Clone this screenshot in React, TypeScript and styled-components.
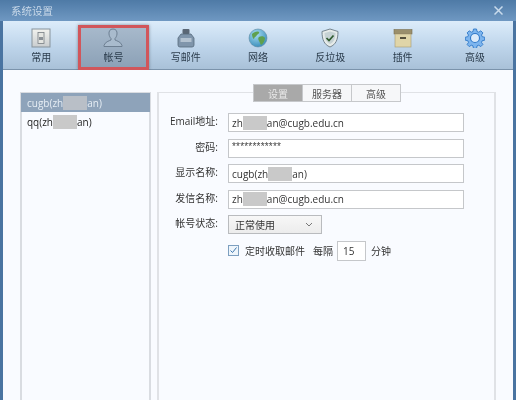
import React from "react";
import styled, { createGlobalStyle } from "styled-components";

const Global = createGlobalStyle`
  html, body { margin: 0; padding: 0; background: #f9fbff; }
  body { font-family: "Open Sans", "Noto Sans CJK SC", sans-serif; }
  #root { width: 516px; height: 400px; overflow: hidden; }
`;

const Window = styled.div`
  width: 516px;
  height: 400px;
  box-sizing: border-box;
  display: flex;
  flex-direction: column;
  background: #4a74a1;
  padding: 0 3px;
  filter: blur(0.4px);
`;

const TitleBar = styled.header`
  height: 21px;
  margin: 0 -3px;
  padding: 0 13px 0 11px;
  flex: none;
  display: flex;
  align-items: center;
  justify-content: space-between;
  background: linear-gradient(#4e7aa6, #6f98c2);
`;

const Title = styled.span`
  font: 10.5px "Noto Sans CJK SC", sans-serif;
  color: #c9d9e9;
`;

const Toolbar = styled.nav`
  height: 49px;
  flex: none;
  box-sizing: border-box;
  display: flex;
  padding-left: 2px;
  background: linear-gradient(#dcecfa, #bdd4ea 55%, #a9c1d8);
  border-bottom: 1px solid #7b93ab;
`;

const Tool = styled.div<{ $active?: boolean }>`
  width: 72.3px;
  height: 48px;
  flex: none;
  box-sizing: border-box;
  display: flex;
  flex-direction: column;
  align-items: center;
  padding-top: ${(p) => (p.$active ? "0" : "7px")};
  gap: 2px;
  font: 10px/14px "Noto Sans CJK SC", sans-serif;
  color: #2b3c4c;
  ${(p) =>
    p.$active &&
    `
    margin: 4px 1px 0;
    width: 70.3px;
    height: 45px;
    border: 3px solid #d1565b;
    box-shadow: 0 0 3px rgba(60,70,80,.55);
    background: linear-gradient(#a7b9cb, #8ca1b7);
  `}
`;

const Content = styled.main`
  flex: 1;
  min-height: 0;
  display: flex;
  gap: 6px;
  padding: 22px 17px 0;
  background: #f9fbff;
`;

const AccountList = styled.ul`
  width: 131px;
  margin: 0;
  padding: 0;
  flex: none;
  box-sizing: border-box;
  list-style: none;
  border-style: solid;
  border-color: #d9dce1;
  border-width: 1px 2px 0;
  font-size: 10px;
`;

const Account = styled.li<{ $selected?: boolean }>`
  height: 19px;
  margin: 0 -1px;
  padding-left: 6px;
  display: flex;
  align-items: center;
  color: ${(p) => (p.$selected ? "#e6edf4" : "#222")};
  background: ${(p) => (p.$selected ? "#8ea3ba" : "transparent")};
`;

const Mask = styled.span<{ $w: number; $tone?: string }>`
  display: inline-block;
  width: ${(p) => p.$w}px;
  height: 14px;
  background: ${(p) => p.$tone ?? "#c9c9c9"};
`;

const Panel = styled.section`
  flex: 1;
  min-width: 0;
  box-sizing: border-box;
  border-style: solid;
  border-color: #e0e2e6;
  border-width: 1px 2px 0;
  display: flex;
  flex-direction: column;
`;

const Tabs = styled.div`
  align-self: center;
  box-sizing: border-box;
  display: flex;
  height: 18px;
  margin-top: -9px;
  margin-left: 1px;
  border: 1px solid #c6c8cb;
  background: #f6f7f9;
`;

const Tab = styled.div<{ $active?: boolean }>`
  width: 48px;
  display: flex;
  align-items: center;
  justify-content: center;
  font: 10px "Noto Sans CJK SC", sans-serif;
  color: ${(p) => (p.$active ? "#e9e9e9" : "#555")};
  background: ${(p) => (p.$active ? "#a9a9a9" : "transparent")};
  & + & {
    border-left: 1px solid #c6c8cb;
  }
`;

const Form = styled.form`
  display: grid;
  grid-template-columns: 59px 236px;
  grid-auto-rows: 19px;
  column-gap: 10px;
  row-gap: 6.5px;
  margin-top: 11px;
`;

const Label = styled.label`
  display: flex;
  align-items: center;
  justify-content: flex-end;
  font: 10px "Open Sans", "Noto Sans CJK SC", sans-serif;
  color: #333;
  white-space: nowrap;
  padding-bottom: 4px;
`;

const FieldBox = styled.div`
  box-sizing: border-box;
  border: 1px solid #c5c7ca;
  background: #fff;
  display: flex;
  align-items: center;
  padding-left: 3px;
  font-size: 10px;
  color: #333;
  white-space: nowrap;
`;

const Stars = styled.span`
  font: 10px "Liberation Sans", sans-serif;
  color: #444;
  letter-spacing: 0.2px;
  padding-bottom: 3px;
`;

const Select = styled.div`
  width: 94px;
  box-sizing: border-box;
  border: 1px solid #b9bbbe;
  background: linear-gradient(#f7f7f7, #ececec);
  display: flex;
  align-items: center;
  justify-content: space-between;
  padding: 0 8px 0 6px;
  font: 10px "Noto Sans CJK SC", sans-serif;
  color: #333;
`;

const Schedule = styled.div`
  grid-column: 2;
  display: flex;
  align-items: center;
  font: 10px "Noto Sans CJK SC", sans-serif;
  color: #333;
  height: 20px;
`;

const Check = styled.span`
  width: 11px;
  height: 11px;
  box-sizing: border-box;
  border: 1px solid #7d9fc0;
  background: #eef5fb;
  display: flex;
  align-items: center;
  justify-content: center;
  margin-right: 6px;
`;

const Every = styled.span`
  margin: 0 4px 0 8px;
`;

const Minutes = styled.div`
  width: 29px;
  height: 20px;
  box-sizing: border-box;
  border: 1px solid #c5c7ca;
  background: #fff;
  display: flex;
  align-items: center;
  padding-left: 5px;
  margin-right: 5px;
  font: 10px "Open Sans", sans-serif;
`;

const Icon = styled.svg`
  width: 20px;
  height: 20px;
  flex: none;
`;

const CloseIcon = () => (
  <svg width="9" height="9" viewBox="0 0 9 9">
    <path d="M.5 .5l8 8M8.500 .5l-8 8" stroke="#c9dbec" strokeWidth="1.500" />
  </svg>
);

const GeneralIcon = () => (
  <Icon viewBox="0 0 20 20">
    <defs>
      <linearGradient id="g1" x1="0" y1="0" x2="0" y2="1">
        <stop offset="0" stopColor="#f2f2ee" />
        <stop offset="1" stopColor="#c9cdcf" />
      </linearGradient>
    </defs>
    <rect x="1" y="1" width="18" height="18" fill="url(#g1)" stroke="#87939c" />
    <rect x="7" y="4.500" width="6" height="11" fill="#e4e5e1" stroke="#777d83" strokeWidth="0.8" />
    <rect x="8" y="9" width="4" height="3" fill="#8a9096" />
  </Icon>
);

const PersonIcon = () => (
  <Icon viewBox="0 0 20 20">
    <path d="M10 1c-3 0-4.300 2.200-4 5 .2 2 1 3.400 2 4.500v1.500c-2 1-6 1.800-7 5.500v1h18v-1c-1-3.700-5-4.500-7-5.500v-1.500c1-1.100 1.800-2.500 2-4.500 .3-2.800-1-5-4-5z" fill="#a9bbcd" stroke="#66788b" strokeWidth="0.9" />
  </Icon>
);

const InkIcon = () => (
  <Icon viewBox="0 0 20 20">
    <rect x="6.500" y="1" width="7" height="5" rx="1" fill="#5a6775" />
    <path d="M5 6h10l3 4v7a2 2 0 0 1-2 2H4a2 2 0 0 1-2-2v-7z" fill="#7f95ab" stroke="#56697c" strokeWidth="0.8" />
    <rect x="4.500" y="10" width="11" height="4" fill="#b3c2d0" />
  </Icon>
);

const GlobeIcon = () => (
  <Icon viewBox="0 0 20 20">
    <defs>
      <radialGradient id="g2" cx="0.4" cy="0.3" r="0.8">
        <stop offset="0" stopColor="#a6dcf2" />
        <stop offset="1" stopColor="#2f86b5" />
      </radialGradient>
    </defs>
    <circle cx="10" cy="10" r="9" fill="url(#g2)" stroke="#5f8aa3" strokeWidth="0.6" />
    <path d="M4 6c2-2 5-3 7-2 1 1-1 2-2 3-1 2-3 2-3 4-1 0-2-3-2-5zM11 9c2-1 5-1 6 1 0 3-2 6-4 7-1-1-1-3-2-4-1-2-1-3 0-4z" fill="#5fa04e" />
  </Icon>
);

const ShieldIcon = () => (
  <Icon viewBox="0 0 20 20">
    <path d="M10 1l8 2.500c0 8-2 13-8 15.500-6-2.500-8-7.500-8-15.500z" fill="#e6ebe9" stroke="#76858f" strokeWidth="1" />
    <path d="M10 3.500l5.500 1.500c0 5-1.500 9-5.500 11-4-2-5.500-6-5.500-11z" fill="#c6d2d4" />
    <path d="M6.500 10l2.500 2.500 4.500-5" fill="none" stroke="#2f5a2e" strokeWidth="1.700" />
  </Icon>
);

const BoxIcon = () => (
  <Icon viewBox="0 0 20 20">
    <rect x="1" y="1.500" width="18" height="4.500" fill="#9a8f6c" stroke="#7a7052" strokeWidth="0.6" />
    <rect x="2" y="6" width="16" height="13" fill="#e0d5a8" stroke="#a59a74" strokeWidth="0.6" />
    <rect x="7" y="9" width="6" height="2" fill="#55503c" />
  </Icon>
);

const GearIcon = () => (
  <Icon viewBox="0 0 20 20">
    <path
      d="M8.500 1h3l.5 2.500 1.700.7 2.100-1.400 2.100 2.100-1.400 2.100.7 1.700 2.500.5v3l-2.500.5-.7 1.700 1.400 2.100-2.100 2.100-2.100-1.400-1.700.7-.5 2.500h-3l-.5-2.500-1.700-.7-2.100 1.400-2.100-2.100 1.400-2.100-.7-1.700-2.500-.5v-3l2.500-.5.7-1.700-1.400-2.100 2.100-2.100 2.100 1.400 1.700-.7z"
      fill="#7db5ee"
      stroke="#2f78c8"
      strokeWidth="0.9"
    />
    <circle cx="10" cy="10" r="4.500" fill="#dcebfa" stroke="#2f78c8" strokeWidth="1.100" />
  </Icon>
);

const tools = [
  { label: "常用", icon: <GeneralIcon /> },
  { label: "帐号", icon: <PersonIcon />, active: true },
  { label: "写邮件", icon: <InkIcon /> },
  { label: "网络", icon: <GlobeIcon /> },
  { label: "反垃圾", icon: <ShieldIcon /> },
  { label: "插件", icon: <BoxIcon /> },
  { label: "高级", icon: <GearIcon /> },
];

export default function App() {
  return (
    <Window>
      <Global />
      <TitleBar>
        <Title>系统设置</Title>
        <CloseIcon />
      </TitleBar>
      <Toolbar>
        {tools.map((t) => (
          <Tool key={t.label} $active={t.active}>
            {t.icon}
            {t.label}
          </Tool>
        ))}
      </Toolbar>
      <Content>
        <AccountList>
          <Account $selected>
            cugb(zh<Mask $w={24} $tone="#b9bfc7" />an)
          </Account>
          <Account>
            qq(zh<Mask $w={24} />an)
          </Account>
        </AccountList>
        <Panel>
          <Tabs>
            <Tab $active>设置</Tab>
            <Tab>服务器</Tab>
            <Tab>高级</Tab>
          </Tabs>
          <Form>
            <Label>Email地址:</Label>
            <FieldBox>
              zh<Mask $w={24} />an@cugb.edu.cn
            </FieldBox>
            <Label>密码:</Label>
            <FieldBox>
              <Stars>************</Stars>
            </FieldBox>
            <Label>显示名称:</Label>
            <FieldBox>
              cugb(zh<Mask $w={24} />an)
            </FieldBox>
            <Label>发信名称:</Label>
            <FieldBox>
              zh<Mask $w={24} />an@cugb.edu.cn
            </FieldBox>
            <Label>帐号状态:</Label>
            <Select>
              正常使用
              <svg width="8" height="5" viewBox="0 0 8 5">
                <path d="M1 1l3 3 3-3" fill="none" stroke="#777" />
              </svg>
            </Select>
            <Schedule>
              <Check>
                <svg width="9" height="9" viewBox="0 0 9 9">
                  <path d="M1.500 4.500l2 2 4-5" fill="none" stroke="#3f78b0" strokeWidth="1" />
                </svg>
              </Check>
              定时收取邮件
              <Every>每隔</Every>
              <Minutes>15</Minutes>
              分钟
            </Schedule>
          </Form>
        </Panel>
      </Content>
    </Window>
  );
}
